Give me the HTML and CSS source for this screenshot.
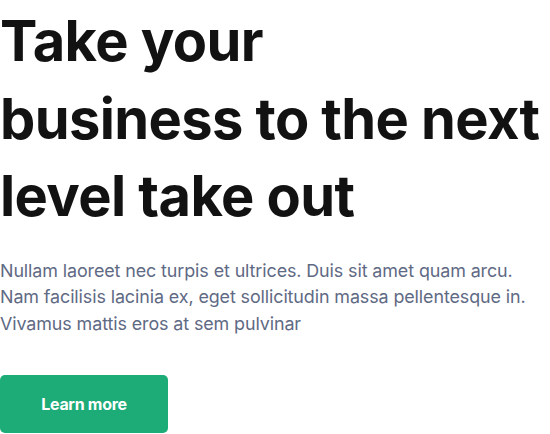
FILE: index.html
```html
<!DOCTYPE html>
<html>
<head>
<meta charset="utf-8">
<link rel="stylesheet" href="styles.css">
</head>
<body>
<section class="hero">
  <h1 class="title">Take your<br>business to the next<br>level take out</h1>
  <p class="lead">Nullam laoreet nec turpis et ultrices. Duis sit amet quam arcu.<br>Nam facilisis lacinia ex, eget sollicitudin massa pellentesque in.<br>Vivamus mattis eros at sem pulvinar</p>
  <a class="btn" href="#">Learn more</a>
</section>
</body>
</html>
```
FILE: styles.css
```css
html, body {
  margin: 0;
  padding: 0;
  background: #ffffff;
}
.hero {
  display: flex;
  flex-direction: column;
  align-items: flex-start;
  font-family: Inter, "Noto Sans", sans-serif;
  width: 550px;
}
.title {
  margin: 3px 0 0 0;
  font-size: 56px;
  line-height: 77.5px;
  font-weight: 700;
  letter-spacing: -0.6px;
  color: #121212;
  white-space: nowrap;
}
.lead {
  margin: 22px 0 0 0;
  font-size: 17.9px;
  line-height: 26.5px;
  color: #5f6a84;
  letter-spacing: -0.1px;
  white-space: nowrap;
}
.btn {
  margin-top: 38px;
  width: 168px;
  height: 58px;
  display: flex;
  align-items: center;
  justify-content: center;
  background: #1dab78;
  color: #ffffff;
  border-radius: 5px;
  font-size: 16px;
  font-weight: 700;
  text-decoration: none;
  letter-spacing: -0.3px;
}
```
